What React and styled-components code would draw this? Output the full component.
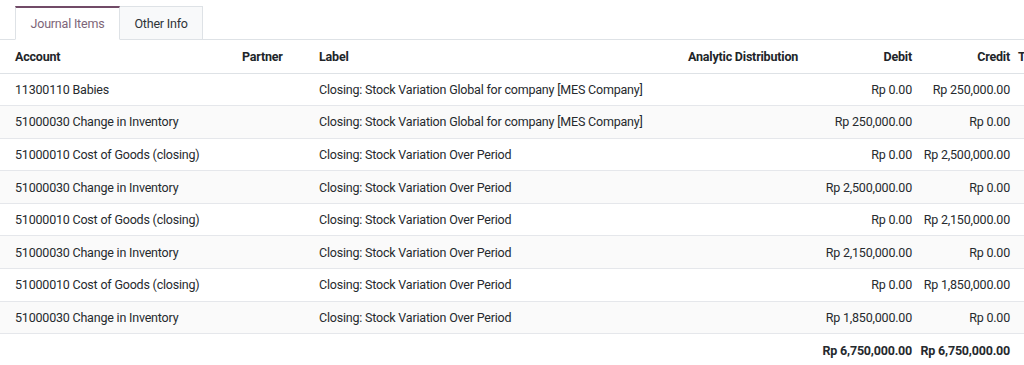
import React from "react";
import styled, { createGlobalStyle } from "styled-components";

const Global = createGlobalStyle`
  html, body { margin: 0; padding: 0; background: #fff; }
  body {
    font-family: Roboto, "Noto Sans", sans-serif;
    font-size: 12.5px;
    letter-spacing: -0.2px;
    color: #262a2e;
    overflow: hidden;
  }
`;

const Page = styled.div`
  width: 1024px;
  height: 365px;
  overflow: hidden;
`;

const TabBar = styled.div`
  display: flex;
  padding: 6px 0 0 15px;
  border-bottom: 1px solid #dee2e6;
`;

const Tab = styled.div`
  box-sizing: border-box;
  height: 34px;
  margin-bottom: -1px;
  padding: 0 14.5px;
  display: flex;
  align-items: center;
  color: ${(p) => (p.$active ? "#7d6578" : "#2f3338")};
  background: ${(p) => (p.$active ? "#fff" : "#f8f9fa")};
  border: 1px solid #dee2e6;
  border-top: ${(p) => (p.$active ? "2px solid #714b67" : "1px solid #dee2e6")};
  border-bottom: ${(p) => (p.$active ? "1px solid #fff" : "1px solid #dee2e6")};
  border-left: ${(p) => (p.$first ? "1px solid #dee2e6" : "none")};
`;

const Table = styled.table`
  border-collapse: collapse;
  table-layout: fixed;
  width: 1100px;
`;

const Th = styled.th`
  box-sizing: border-box;
  height: 33px;
  padding: 0 4px;
  padding-left: ${(p) => (p.$first ? "15px" : "4px")};
  font-weight: 700;
  text-align: ${(p) => (p.$right ? "right" : "left")};
  white-space: nowrap;
  border-bottom: 1px solid #dee2e6;
  color: #212529;
`;

const Row = styled.tr`
  background: ${(p) => (p.$striped ? "#fafafa" : "#fff")};
  border-bottom: 1px solid #e5e7eb;
`;

const Td = styled.td`
  box-sizing: border-box;
  height: 32.6px;
  padding: 0 4px;
  padding-left: ${(p) => (p.$first ? "15px" : "4px")};
  text-align: ${(p) => (p.$right ? "right" : "left")};
  white-space: nowrap;
  font-weight: ${(p) => (p.$bold ? 700 : 400)};
`;

const rows = [
  ["11300110 Babies", "Closing: Stock Variation Global for company [MES Company]", "Rp 0.00", "Rp 250,000.00"],
  ["51000030 Change in Inventory", "Closing: Stock Variation Global for company [MES Company]", "Rp 250,000.00", "Rp 0.00"],
  ["51000010 Cost of Goods (closing)", "Closing: Stock Variation Over Period", "Rp 0.00", "Rp 2,500,000.00"],
  ["51000030 Change in Inventory", "Closing: Stock Variation Over Period", "Rp 2,500,000.00", "Rp 0.00"],
  ["51000010 Cost of Goods (closing)", "Closing: Stock Variation Over Period", "Rp 0.00", "Rp 2,150,000.00"],
  ["51000030 Change in Inventory", "Closing: Stock Variation Over Period", "Rp 2,150,000.00", "Rp 0.00"],
  ["51000010 Cost of Goods (closing)", "Closing: Stock Variation Over Period", "Rp 0.00", "Rp 1,850,000.00"],
  ["51000030 Change in Inventory", "Closing: Stock Variation Over Period", "Rp 1,850,000.00", "Rp 0.00"],
];

export default function App() {
  return (
    <Page>
      <Global />
      <TabBar>
        <Tab $active $first>Journal Items</Tab>
        <Tab>Other Info</Tab>
      </TabBar>
      <Table>
        <colgroup>
          <col style={{ width: 238 }} />
          <col style={{ width: 77 }} />
          <col style={{ width: 369 }} />
          <col style={{ width: 124 }} />
          <col style={{ width: 108 }} />
          <col style={{ width: 98 }} />
          <col />
        </colgroup>
        <thead>
          <tr>
            <Th $first>Account</Th>
            <Th>Partner</Th>
            <Th>Label</Th>
            <Th>Analytic Distribution</Th>
            <Th $right>Debit</Th>
            <Th $right>Credit</Th>
            <Th>Tax Grids</Th>
          </tr>
        </thead>
        <tbody>
          {rows.map((r, i) => (
            <Row key={i} $striped={i % 2 === 1}>
              <Td $first>{r[0]}</Td>
              <Td></Td>
              <Td>{r[1]}</Td>
              <Td></Td>
              <Td $right>{r[2]}</Td>
              <Td $right>{r[3]}</Td>
              <Td></Td>
            </Row>
          ))}
        </tbody>
        <tfoot>
          <tr>
            <Td $first></Td>
            <Td></Td>
            <Td></Td>
            <Td></Td>
            <Td $right $bold>Rp 6,750,000.00</Td>
            <Td $right $bold>Rp 6,750,000.00</Td>
            <Td></Td>
          </tr>
        </tfoot>
      </Table>
    </Page>
  );
}
